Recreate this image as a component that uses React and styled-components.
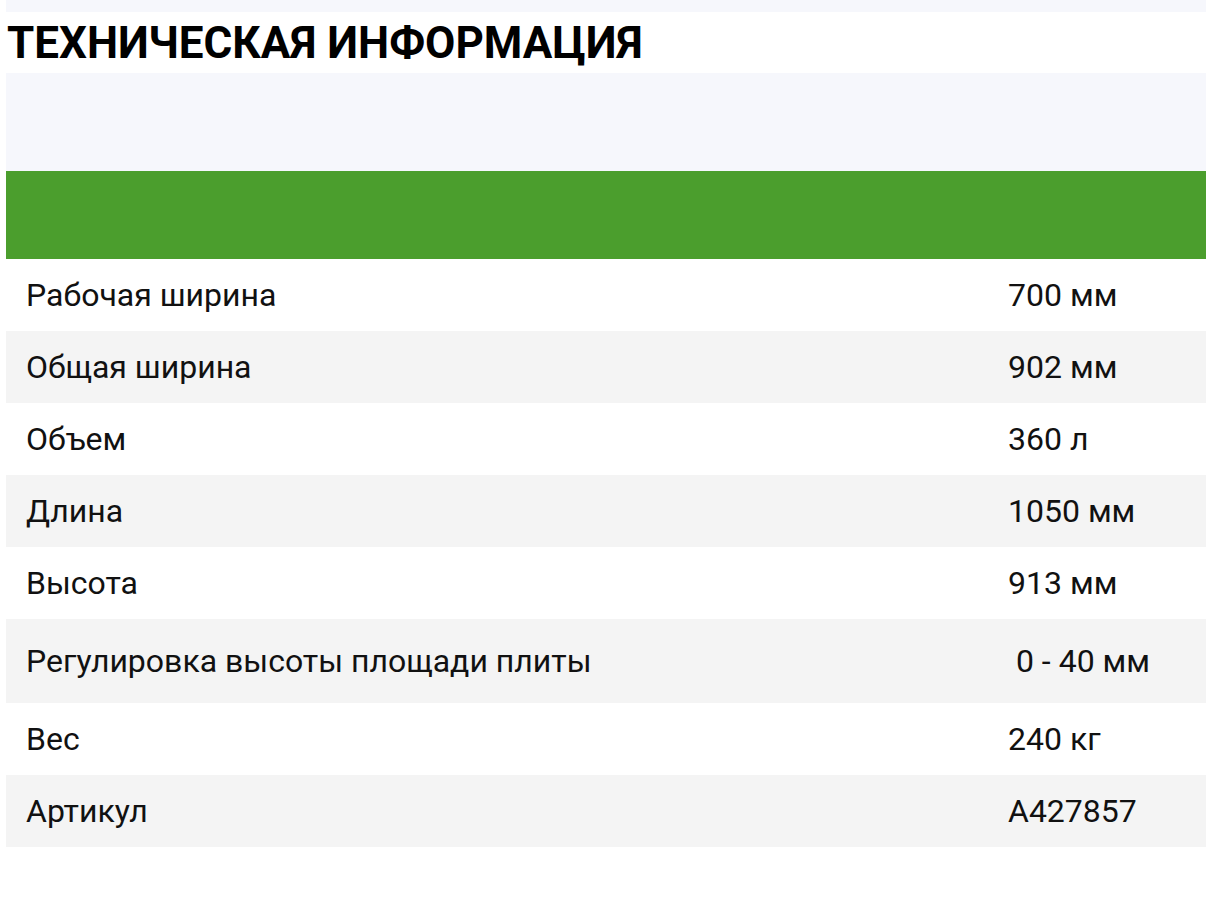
import styled, { createGlobalStyle } from "styled-components";

const SPECS = [
  { label: "Рабочая ширина", value: "700 мм" },
  { label: "Общая ширина", value: "902 мм" },
  { label: "Объем", value: "360 л" },
  { label: "Длина", value: "1050 мм" },
  { label: "Высота", value: "913 мм" },
  { label: "Регулировка высоты площади плиты", value: "\u00a00 - 40 мм", tall: true },
  { label: "Вес", value: "240 кг" },
  { label: "Артикул", value: "A427857" },
];

const App = () => {
  return (
    <Page>
      <GlobalStyle />
      <TopStrip />
      <Title>ТЕХНИЧЕСКАЯ ИНФОРМАЦИЯ</Title>
      <LightPanel />
      <GreenBar />
      <SpecTable>
        <tbody>
          {SPECS.map((row, idx) => (
            <Row key={row.label} $odd={idx % 2 === 1} $tall={row.tall}>
              <Label>{row.label}</Label>
              <Value>{row.value}</Value>
            </Row>
          ))}
        </tbody>
      </SpecTable>
    </Page>
  );
};

const GlobalStyle = createGlobalStyle`
  body {
    margin: 0;
    background: #ffffff;
    font-family: Roboto, "Liberation Sans", sans-serif;
    color: #111111;
  }
`;

const Page = styled.div`
  padding: 0 12px 0 6px;
`;

const TopStrip = styled.div`
  height: 12px;
  background: #f6f7fc;
`;

const Title = styled.h2`
  margin: 0;
  height: 61px;
  font-size: 44px;
  line-height: 62px;
  font-weight: 700;
  color: #000000;
  padding-left: 1px;
`;

const LightPanel = styled.div`
  height: 98px;
  background: #f6f7fc;
`;

const GreenBar = styled.div`
  height: 88px;
  background: #4b9e2d;
`;

const SpecTable = styled.table`
  width: 100%;
  border-collapse: collapse;
  font-size: 32px;
`;

const Row = styled.tr`
  height: ${(p) => (p.$tall ? "84px" : "72px")};
  background: ${(p) => (p.$odd ? "#f4f4f4" : "#ffffff")};
`;

const Label = styled.td`
  padding: 0 0 0 20px;
  width: 962px;
  vertical-align: middle;
`;

const Value = styled.td`
  padding: 0 0 0 20px;
  vertical-align: middle;
`;

export default App;
